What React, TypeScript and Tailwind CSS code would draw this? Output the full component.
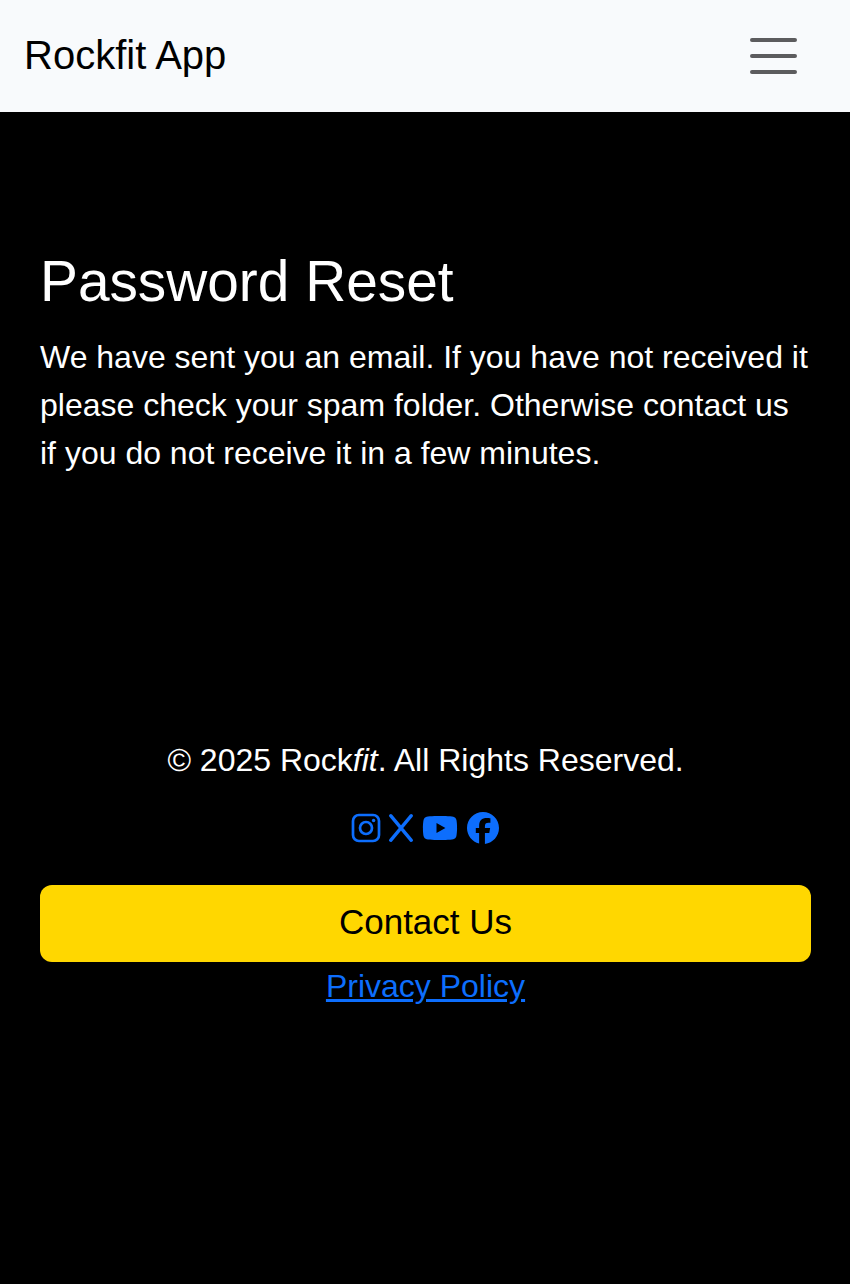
import { FaYoutube } from "react-icons/fa6";

function InstagramLogo() {
  return (
    <svg viewBox="0 0 30 30" className="size-[30px]" fill="none" stroke="currentColor" strokeWidth="2.7">
      <rect x="2" y="2" width="26" height="26" rx="6" />
      <circle cx="15" cy="15" r="6" />
      <circle cx="22.6" cy="7.5" r="1.7" fill="currentColor" stroke="none" />
    </svg>
  );
}

function XLogo() {
  return (
    <svg viewBox="0 0 26 30" className="ml-[7px] h-[30px] w-[26px]" fill="none" stroke="currentColor" strokeWidth="3.4" strokeLinecap="round">
      <path d="M2.7 2.7L23.3 27.3M23.3 2.7L2.7 27.3" />
    </svg>
  );
}

function FacebookLogo() {
  return (
    <svg viewBox="0 0 32 32" className="ml-[9px] size-8" fill="currentColor">
      <path d="M32 16C32 7.16 24.84 0 16 0S0 7.16 0 16c0 7.5 5.16 13.8 12.13 15.53V20.9H8.8V16h3.33v-2.1c0-5.45 2.46-7.97 7.8-7.97 1.02 0 2.77.2 3.48.4v4.42c-.37-.04-1.03-.06-1.85-.06-2.63 0-3.64 1-3.64 3.58V16h5.23l-.9 4.9h-4.33v10.98C25.85 30.93 32 24.18 32 16z" />
    </svg>
  );
}

export default function App() {
  return (
    <div className="flex min-h-[1284px] flex-col bg-black font-['Liberation_Sans',Arial,sans-serif] text-[32px] leading-[48px] text-white">
      <header className="flex h-28 items-center justify-between bg-[#f8fafc] pr-12 pl-6 text-black">
        <a href="#" className="-mt-0.5 text-[40px] leading-[60px]">Rockfit App</a>
        <button aria-label="Menu" className="text-[#5c5c5e]">
          <svg viewBox="0 0 56 40" className="h-10 w-14" stroke="currentColor" strokeWidth="4" strokeLinecap="round">
            <path d="M6 4h43M6 20h43M6 36h43" />
          </svg>
        </button>
      </header>
      <main className="px-10 pt-[136px]">
        <h1 className="text-[56.8px] leading-[68px]">Password Reset</h1>
        <p className="mt-[17px]">
          We have sent you an email. If you have not received it<br />
          please check your spam folder. Otherwise contact us<br />
          if you do not receive it in a few minutes.
        </p>
      </main>
      <footer className="mt-[259px] flex flex-col items-center pr-[39px] pl-10">
        <p>© 2025 Rock<em>fit</em>. All Rights Reserved.</p>
        <div className="mt-5 flex h-12 items-center pr-0.5 text-[#0d6efd]">
          <InstagramLogo />
          <XLogo />
          <FaYoutube className="ml-2 size-9" />
          <FacebookLogo />
        </div>
        <button className="mt-[33px] h-[77px] w-full rounded-xl bg-[#ffd700] pb-1 text-[35px] text-black">Contact Us</button>
        <a href="#" className="text-[#0d6efd] underline">Privacy Policy</a>
      </footer>
    </div>
  );
}
